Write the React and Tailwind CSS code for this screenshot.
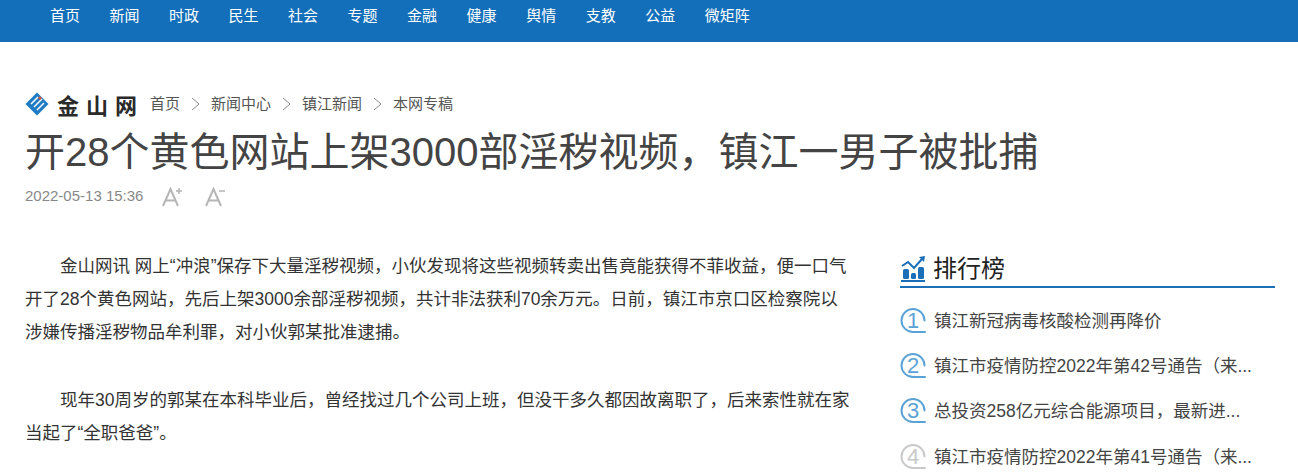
import React from 'react';

const sans = "font-['Liberation_Sans','Noto_Sans_CJK_SC',sans-serif]";

const navItems = ['首页', '新闻', '时政', '民生', '社会', '专题', '金融', '健康', '舆情', '支教', '公益', '微矩阵'];
const crumbs = ['新闻中心', '镇江新闻', '本网专稿'];
const ranks = [
    { n: 1, title: '镇江新冠病毒核酸检测再降价', color: '#5ba3d6' },
    { n: 2, title: '镇江市疫情防控2022年第42号通告（来...', color: '#5ba3d6' },
    { n: 3, title: '总投资258亿元综合能源项目，最新进...', color: '#5ba3d6' },
    { n: 4, title: '镇江市疫情防控2022年第41号通告（来...', color: '#c9c9c9' },
];

const Logo = () => (
    <svg width="24" height="24" viewBox="0 0 24 24" className="shrink-0">
        <path d="M12 0.5 L23.5 12 L12 23.5 L0.5 12 Z" fill="#1f7cc4" />
        <path d="M6 12 L13 5 M9 15 L17 7 M12 18 L19 11" stroke="#fff" strokeWidth="1.5" />
        <circle cx="15" cy="6" r="1.6" fill="#d9503f" />
    </svg>
);

const Chevron = () => (
    <svg width="9" height="14" viewBox="0 0 9 14" className="shrink-0" fill="none" stroke="#8a8a8a" strokeWidth="1">
        <path d="M1 1 L8 7 L1 13" />
    </svg>
);

const ChartIcon = () => (
    <svg width="26" height="26" viewBox="0 0 26 26" className="shrink-0" fill="#1a6fb8">
        <rect x="1" y="24" width="24" height="2" />
        <rect x="3" y="13" width="6" height="10" rx="1.5" />
        <rect x="11" y="17" width="5" height="6" rx="1.5" />
        <rect x="18" y="11" width="6" height="12" rx="1.5" />
        <path d="M2 10 L8 6 L14 12 L22 3" fill="none" stroke="#1a6fb8" strokeWidth="2" />
        <path d="M19 1 L25 0 L24 6 Z" />
    </svg>
);

// circled rank number, the ring runs into a short tail at bottom right
const RankBadge = ({ n, color }) => (
    <div className="relative w-[26px] h-[26px] shrink-0">
        <svg width="26" height="26" viewBox="0 0 26 26" fill="none" stroke={color} strokeWidth="2">
            <path d="M25 24 L13 24 A11.5 11.5 0 1 1 24.5 12.5" strokeLinecap="round" />
        </svg>
        <span className="absolute inset-0 flex items-center justify-center text-[22px] leading-none font-light" style={{ color }}>
            {n}
        </span>
    </div>
);

// A+ / A- font size buttons
const FontSizeIcon = ({ plus, className }) => (
    <svg width="20" height="20" viewBox="0 0 20 20" className={className} fill="none" stroke="#b5b5b5" strokeWidth="2">
        <path d="M1 19 L8.5 2 L16 19 M4 13.5 L13 13.5" />
        <path d="M14 4 L20 4" strokeWidth="1.5" />
        {plus && <path d="M17 1 L17 7" strokeWidth="1.5" />}
    </svg>
);

const App = () => {
    return (
        <div className={`h-[474px] overflow-hidden bg-white ${sans}`}>
            {/* Top nav */}
            <nav className="h-[42px] bg-[#146fba] border-b border-[#1a6fb8] pl-[50px] pt-[5px] flex gap-[29.5px] text-[15px] leading-[21px] text-white">
                {navItems.map((item) => (
                    <a key={item} className="h-[21px]">{item}</a>
                ))}
            </nav>

            <div className="pl-[25px] pr-[23px]">
                {/* Breadcrumb */}
                <div className="flex items-center mt-[47px] h-[30px]">
                    <Logo />
                    <span className="ml-[8px] w-[93px] text-[22px] font-bold tracking-[7px] text-[#2a2a2a] font-['Noto_Sans_CJK_SC',sans-serif]">金山网</span>
                    <div className="flex items-center gap-[11px] text-[15px] text-[#555]">
                        <span>首页</span>
                        {crumbs.map((c) => (
                            <React.Fragment key={c}>
                                <Chevron />
                                <span>{c}</span>
                            </React.Fragment>
                        ))}
                    </div>
                </div>

                {/* Title */}
                <h1 className="mt-[7px] text-[40px] leading-[52px] font-normal text-[#444]">
                    开28个黄色网站上架3000部淫秽视频，镇江一男子被批捕
                </h1>

                {/* Meta */}
                <div className="flex items-center mt-[3px] h-[30px] text-[15px] text-[#888]">
                    <span>2022-05-13 15:36</span>
                    <FontSizeIcon plus className="ml-[19px] mt-[2px]" />
                    <FontSizeIcon className="ml-[23px] mt-[2px]" />
                </div>

                <div className="flex justify-between mt-[39px]">
                    {/* Article */}
                    <div className="w-[825px] text-[17.5px] leading-[33px] text-[#333]">
                        <p className="indent-[35px]">
                            金山网讯 网上“冲浪”保存下大量淫秽视频，小伙发现将这些视频转卖出售竟能获得不菲收益，便一口气开了28个黄色网站，先后上架3000余部淫秽视频，共计非法获利70余万元。日前，镇江市京口区检察院以涉嫌传播淫秽物品牟利罪，对小伙郭某批准逮捕。
                        </p>
                        <p className="indent-[35px] mt-[35px]">
                            现年30周岁的郭某在本科毕业后，曾经找过几个公司上班，但没干多久都因故离职了，后来索性就在家当起了“全职爸爸”。
                        </p>
                    </div>

                    {/* Ranking */}
                    <aside className="w-[375px] pt-[1px]">
                        <div className="flex items-center gap-[7px] h-[37px] border-b-2 border-[#1a6fb8] text-[24px] text-[#222]">
                            <ChartIcon />
                            <span>排行榜</span>
                        </div>
                        <ul className="mt-[10px]">
                            {ranks.map((r) => (
                                <li key={r.n} className="flex items-center gap-[8px] h-[45.4px] text-[17.5px] text-[#444]">
                                    <RankBadge n={r.n} color={r.color} />
                                    <span>{r.title}</span>
                                </li>
                            ))}
                        </ul>
                    </aside>
                </div>
            </div>
        </div>
    );
};

export default App;
